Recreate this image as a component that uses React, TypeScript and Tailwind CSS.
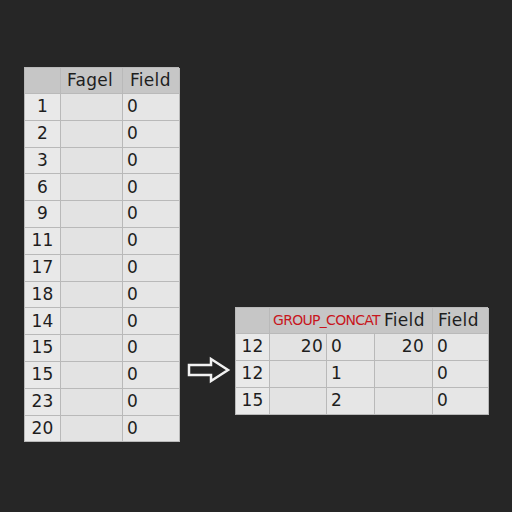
const leftRows = ['1', '2', '3', '6', '9', '11', '17', '18', '14', '15', '15', '23', '20'];

const rightRows = [
  ['12', '20', '0', '20', '0'],
  ['12', '', '1', '', '0'],
  ['15', '', '2', '', '0'],
];

const cell = 'border-r border-b border-[#b9b9b9] flex items-center';

export default function App() {
  return (
    <div
      className="w-[512px] h-[512px] bg-[#262626] relative text-[#1e1e1e] text-[17px] tracking-[0.3px]"
      style={{ fontFamily: '"DejaVu Sans", sans-serif' }}
    >
      {/* left table */}
      <div className="absolute left-[24px] top-[67px] w-[155px] grid grid-cols-[36px_62px_57px] border-l border-t border-[#b9b9b9]">
        <div className={`${cell} h-[26px] bg-[#c6c6c6]`} />
        <div className={`${cell} h-[26px] bg-[#c6c6c6] pl-[6px]`}>Fagel</div>
        <div className={`${cell} h-[26px] bg-[#c6c6c6] pl-[7px]`}>Field</div>
        {leftRows.map((n, i) => (
          <div key={i} className="contents">
            <div className={`${cell} h-[26.8px] bg-[#e9e9e9] justify-center`}>{n}</div>
            <div className={`${cell} h-[26.8px] bg-[#e3e3e3]`} />
            <div className={`${cell} h-[26.8px] bg-[#e6e6e6] pl-[4px]`}>0</div>
          </div>
        ))}
      </div>

      {/* arrow */}
      <svg className="absolute left-[187px] top-[356px]" width="44" height="28" viewBox="0 0 44 28">
        <path d="M2 9 H24 V3 L41 14 L24 25 V19 H2 Z" fill="#262626" stroke="#f2f2f2" strokeWidth="2.5" strokeLinejoin="miter" />
      </svg>

      {/* right table */}
      <div className="absolute left-[235px] top-[307px] w-[253px] grid grid-cols-[34px_57px_48px_58px_56px] border-l border-t border-[#b9b9b9]">
        <div className={`${cell} h-[26px] bg-[#c6c6c6]`} />
        <div className={`${cell} col-span-3 h-[26px] bg-[#c6c6c6] pl-[3px] whitespace-nowrap`}>
          <span className="text-[#c8161d] text-[14px] tracking-[-0.7px]">GROUP_CONCAT</span>
          <span className="ml-[4px]">Field</span>
        </div>
        <div className={`${cell} h-[26px] bg-[#c6c6c6] pl-[5px]`}>Field</div>
        {rightRows.map((r, i) => (
          <div key={i} className="contents">
            <div className={`${cell} h-[27px] bg-[#e9e9e9] justify-center`}>{r[0]}</div>
            <div className={`${cell} h-[27px] bg-[#e3e3e3] justify-end pr-[3px]`}>{r[1]}</div>
            <div className={`${cell} h-[27px] bg-[#e6e6e6] pl-[4px]`}>{r[2]}</div>
            <div className={`${cell} h-[27px] bg-[#e3e3e3] justify-end pr-[8px]`}>{r[3]}</div>
            <div className={`${cell} h-[27px] bg-[#e6e6e6] pl-[4px]`}>{r[4]}</div>
          </div>
        ))}
      </div>
    </div>
  );
}
